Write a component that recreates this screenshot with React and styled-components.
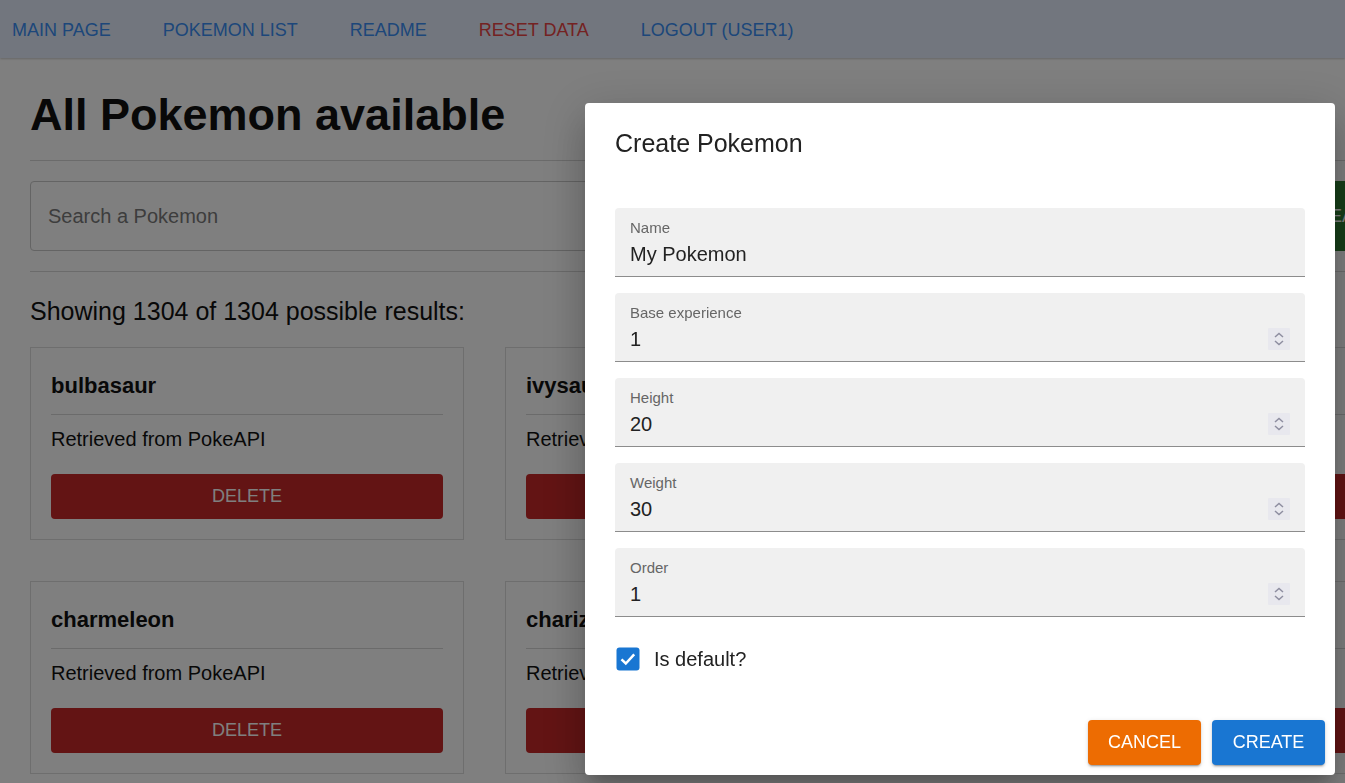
import React from "react";
import styled, { createGlobalStyle } from "styled-components";

const GlobalStyle = createGlobalStyle`
  html, body {
    margin: 0;
    padding: 0;
    background: #fff;
    overflow: hidden;
    font-family: "Liberation Sans", Arial, sans-serif;
  }
`;

const NAV_LINKS = [
  { label: "Main page" },
  { label: "Pokemon list" },
  { label: "Readme" },
  { label: "Reset data", danger: true },
  { label: "Logout (user1)" },
];

const POKEMON = ["bulbasaur", "ivysaur", "venusaur", "charmeleon", "charizard", "squirtle"];

const FIELDS = [
  { label: "Name", value: "My Pokemon" },
  { label: "Base experience", value: "1", number: true },
  { label: "Height", value: "20", number: true },
  { label: "Weight", value: "30", number: true },
  { label: "Order", value: "1", number: true },
];

const SpinIcon = () => (
  <svg width="22" height="22" viewBox="0 0 22 22">
    <rect width="22" height="22" rx="1" fill="#e8e8ee" />
    <path d="M7 9 L11 5.5 L15 9" fill="none" stroke="#8e8ea0" strokeWidth="1.5" />
    <path d="M7 13 L11 16.5 L15 13" fill="none" stroke="#8e8ea0" strokeWidth="1.5" />
  </svg>
);

const CheckIcon = () => (
  <svg width="24" height="24" viewBox="0 0 24 24">
    <rect x="0.5" y="0.5" width="23" height="23" rx="3" fill="#1976d2" />
    <path d="M5.5 12.3 L9.8 16.5 L18.2 7.4" fill="none" stroke="#fff" strokeWidth="2.5" />
  </svg>
);

const App = () => {
  return (
    <>
      <GlobalStyle />
      <Nav>
        {NAV_LINKS.map(l => (
          <NavLink key={l.label} $danger={l.danger}>
            {l.label}
          </NavLink>
        ))}
      </Nav>
      <Main>
        <Heading>All Pokemon available</Heading>
        <Rule />
        <SearchRow>
          <SearchInput placeholder="Search a Pokemon" />
          <SearchButton>Search</SearchButton>
        </SearchRow>
        <Rule />
        <Results>Showing 1304 of 1304 possible results:</Results>
        <CardGrid>
          {POKEMON.map(name => (
            <Card key={name}>
              <CardTitle>{name}</CardTitle>
              <CardRule />
              <CardText>Retrieved from PokeAPI</CardText>
              <DeleteButton>Delete</DeleteButton>
            </Card>
          ))}
        </CardGrid>
      </Main>

      <Backdrop>
        <Dialog>
          <DialogTitle>Create Pokemon</DialogTitle>
          <DialogContent>
            {FIELDS.map(f => (
              <Field key={f.label}>
                <FieldText>
                  <FieldLabel>{f.label}</FieldLabel>
                  <FieldValue>{f.value}</FieldValue>
                </FieldText>
                {f.number && (
                  <Spin>
                    <SpinIcon />
                  </Spin>
                )}
              </Field>
            ))}
            <CheckRow>
              <CheckIcon />
              <CheckLabel>Is default?</CheckLabel>
            </CheckRow>
          </DialogContent>
          <Actions>
            <ActionButton $color="#ed6c02">Cancel</ActionButton>
            <ActionButton $color="#1976d2">Create</ActionButton>
          </Actions>
        </Dialog>
      </Backdrop>
    </>
  );
};

export default App;

const Nav = styled.nav`
  height: 58px;
  display: flex;
  align-items: center;
  gap: 52px;
  padding: 2px 12px 0;
  box-sizing: border-box;
  background: #e4edfd;
  box-shadow: 0 1px 2px rgba(0, 0, 0, 0.2);
`;

const NavLink = styled.a`
  font-size: 18px;
  text-transform: uppercase;
  color: ${p => (p.$danger ? "#e84444" : "#3a8ef4")};
  cursor: pointer;
`;

const Main = styled.main`
  width: 1384px;
  padding: 32px 30px 0;
`;

const Heading = styled.h1`
  margin: 0;
  font-size: 45px;
  line-height: 50px;
  font-weight: 700;
  color: #111;
`;

const Rule = styled.hr`
  margin: 20px 0;
  border: 0;
  border-top: 1px solid #d6d6d6;
`;

const SearchRow = styled.div`
  display: flex;
  gap: 20px;
  height: 70px;
`;

const SearchInput = styled.input`
  flex: 1;
  box-sizing: border-box;
  border: 1px solid #c8c8c8;
  border-radius: 4px;
  padding: 0 17px;
  font-family: inherit;
  font-size: 20px;
  &::placeholder {
    color: #7a7a7a;
  }
`;

const SearchButton = styled.button`
  width: 117px;
  border: 0;
  border-radius: 4px;
  background: #2e7d32;
  color: #fff;
  font-family: inherit;
  font-size: 18px;
  text-transform: uppercase;
`;

const Results = styled.p`
  margin: 0;
  padding-top: 4px;
  font-size: 25px;
  line-height: 30px;
  color: #111;
`;

const CardGrid = styled.div`
  display: grid;
  grid-template-columns: repeat(3, 434px);
  gap: 41px;
  margin-top: 21px;
`;

const Card = styled.div`
  box-sizing: border-box;
  border: 1px solid #dcdcdc;
  padding: 20px;
`;

const CardTitle = styled.h3`
  margin: 5px 0 0;
  font-size: 22px;
  line-height: 26px;
  color: #111;
`;

const CardRule = styled.hr`
  margin: 15px 0 0;
  border: 0;
  border-top: 1px solid #d6d6d6;
`;

const CardText = styled.p`
  margin: 12px 0 0;
  font-size: 20px;
  line-height: 24px;
  color: #111;
`;

const DeleteButton = styled.button`
  display: block;
  width: 100%;
  height: 45px;
  margin-top: 23px;
  border: 0;
  border-radius: 4px;
  background: #c62828;
  color: #fff;
  font-family: inherit;
  font-size: 18px;
  text-transform: uppercase;
`;

const Backdrop = styled.div`
  position: fixed;
  inset: 0;
  background: rgba(0, 0, 0, 0.5);
  display: flex;
  justify-content: flex-end;
  align-items: flex-start;
  padding: 103px 10px 0 0;
`;

const Dialog = styled.div`
  width: 750px;
  background: #fff;
  border-radius: 4px;
  box-shadow: 0 11px 15px -7px rgba(0, 0, 0, 0.2), 0 24px 38px 3px rgba(0, 0, 0, 0.14),
    0 9px 46px 8px rgba(0, 0, 0, 0.12);
`;

const DialogTitle = styled.h2`
  margin: 0;
  padding: 20px 30px 0;
  font-size: 25px;
  line-height: 40px;
  font-weight: 400;
  color: #222;
`;

const DialogContent = styled.div`
  padding: 45px 30px 0;
  display: flex;
  flex-direction: column;
  gap: 16px;
`;

const Field = styled.div`
  display: flex;
  align-items: flex-end;
  background: #f0f0f0;
  border-radius: 4px 4px 0 0;
  border-bottom: 1px solid #8c8c8c;
  padding: 11px 15px 10px;
`;

const FieldText = styled.div`
  flex: 1;
  display: flex;
  flex-direction: column;
  gap: 5px;
`;

const FieldLabel = styled.span`
  font-size: 15px;
  line-height: 18px;
  color: #666;
`;

const FieldValue = styled.span`
  font-size: 20px;
  line-height: 24px;
  color: #222;
`;

const Spin = styled.span`
  display: flex;
  margin-bottom: 1px;
`;

const CheckRow = styled.label`
  display: flex;
  align-items: center;
  gap: 14px;
  height: 40px;
  margin-top: 6px;
  padding-left: 1px;
`;

const CheckLabel = styled.span`
  font-size: 20px;
  color: #222;
`;

const Actions = styled.div`
  display: flex;
  justify-content: flex-end;
  gap: 11px;
  padding: 41px 10px 10px;
`;

const ActionButton = styled.button`
  width: 113px;
  height: 45px;
  border: 0;
  border-radius: 4px;
  background: ${p => p.$color};
  color: #fff;
  font-family: inherit;
  font-size: 18px;
  text-transform: uppercase;
  box-shadow: 0 3px 1px -2px rgba(0, 0, 0, 0.2), 0 2px 2px 0 rgba(0, 0, 0, 0.14),
    0 1px 5px 0 rgba(0, 0, 0, 0.12);
`;
